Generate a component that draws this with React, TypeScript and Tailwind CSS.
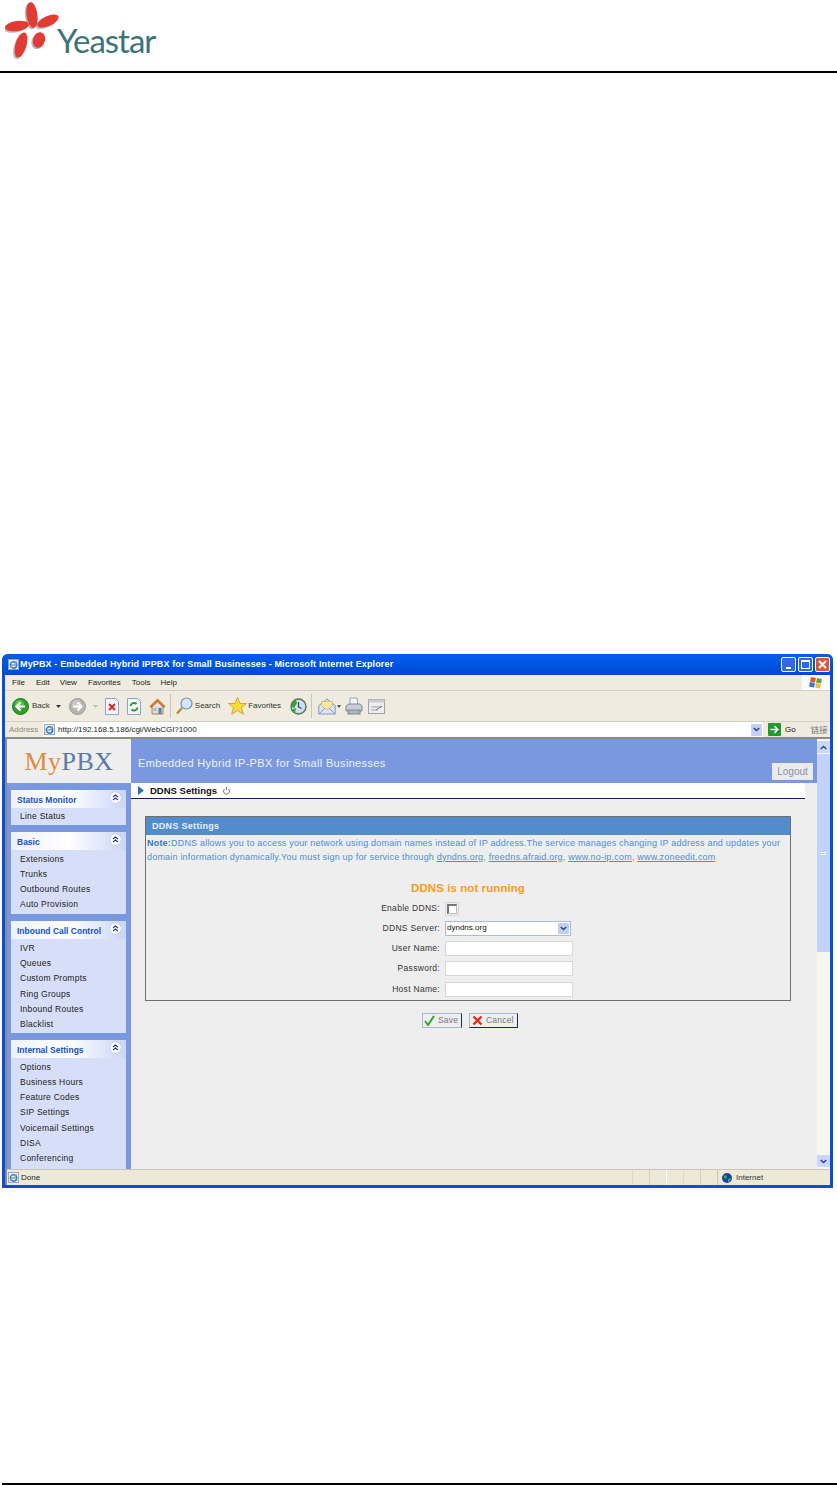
import React from "react";

const Back = ({ gray = false }: { gray?: boolean }) => (
  <svg width="17" height="17" viewBox="0 0 17 17" className="shrink-0">
    <circle cx="8.5" cy="8.5" r="8" fill={gray ? "#b5b5ae" : "#2f9e2a"} stroke={gray ? "#9b9b95" : "#1c7a1c"} />
    <circle cx="7.5" cy="6.5" r="4.5" fill={gray ? "#d2d2cc" : "#6fd05a"} opacity="0.7" />
    {gray ? (
      <path d="M4 8.5h8M8.5 4.5l4 4-4 4" stroke="#fff" strokeWidth="2.2" fill="none" />
    ) : (
      <path d="M13 8.5H5M8.5 4.5l-4 4 4 4" stroke="#fff" strokeWidth="2.2" fill="none" />
    )}
  </svg>
);
const Doc = ({ children }: { children: React.ReactNode }) => (
  <svg width="14" height="17" viewBox="0 0 14 17" className="shrink-0">
    <path d="M.5.5h10l3 3v13H.5z" fill="#f3f5fb" stroke="#8ea3cc" />
    {children}
  </svg>
);
const Home = () => (
  <svg width="17" height="17" viewBox="0 0 17 17" className="shrink-0">
    <path d="M3 8v8h11V8" fill="#e9dcc0" stroke="#a2865a" />
    <path d="M8.5 1L.8 8.5l1.4 1L8.5 4l6.3 5.5 1.4-1z" fill="#dd7c2a" stroke="#a9541a" strokeWidth=".6" />
    <rect x="9.5" y="10" width="3" height="6" fill="#4d7fc7" />
    <rect x="4.5" y="10" width="3" height="3" fill="#9cc0ea" />
  </svg>
);
const Search = () => (
  <svg width="17" height="18" viewBox="0 0 17 18" className="shrink-0">
    <path d="M6 11l-5 5.5" stroke="#b88a3a" strokeWidth="2.4" />
    <circle cx="10.5" cy="6.5" r="5.5" fill="#d3e6fa" stroke="#6b93bf" strokeWidth="1.2" />
  </svg>
);
const Star = () => (
  <svg width="19" height="18" viewBox="0 0 19 18" className="shrink-0">
    <path d="M9.5.5l2.6 6h6.4l-5 4.1 1.9 6.7-5.9-3.8-5.9 3.8 1.9-6.7-5-4.1h6.4z" fill="#fcd93b" stroke="#c39a1c" strokeWidth=".8" />
  </svg>
);
const History = () => (
  <svg width="17" height="17" viewBox="0 0 17 17" className="shrink-0">
    <circle cx="8.5" cy="8.5" r="7.5" fill="#cfdcea" stroke="#54765a" strokeWidth="1.4" />
    <path d="M1.5 9A7 7 0 0 1 6 2l1 3-3 5z" fill="#37a03a" />
    <path d="M1 12l5-2-1 5z" fill="#37a03a" />
    <path d="M8.5 4v5l3 1.5" stroke="#27496f" strokeWidth="1.2" fill="none" />
  </svg>
);
const Mail = () => (
  <svg width="18" height="17" viewBox="0 0 18 17" className="shrink-0">
    <path d="M.8 7.500L9 1l8.200 6.500V16H.8z" fill="#dbe6f8" stroke="#7f98c9" />
    <path d="M3.500 8V3.500h11V8L9 12z" fill="#fbe6a8" stroke="#d9a646" strokeWidth=".6" />
    <path d="M1 16l6-6M17 16l-6-6" stroke="#7f98c9" />
  </svg>
);
const Printer = () => (
  <svg width="18" height="18" viewBox="0 0 18 18" className="shrink-0">
    <path d="M5 1h7l1 7H5z" fill="#f4f5f8" stroke="#9aa3b4" />
    <path d="M1 9l3-2h11l2 2v5H1z" fill="#c9ced6" stroke="#7f8794" />
    <rect x="3" y="13" width="12" height="4" fill="#aeb4bf" stroke="#7f8794" />
  </svg>
);
const Edit = () => (
  <svg width="17" height="15" viewBox="0 0 17 15" className="shrink-0">
    <rect x=".5" y=".5" width="16" height="14" fill="#eceef0" stroke="#9ba1a8" />
    <rect x=".5" y=".5" width="16" height="3" fill="#c7ccd2" />
    <path d="M3 8h11M3 11h7" stroke="#9ba1a8" />
    <path d="M8 11l6-4" stroke="#737a82" />
  </svg>
);
const IeIcon = ({ size = 12 }: { size?: number }) => (
  <svg width={size} height={size} viewBox="0 0 12 12" className="shrink-0">
    <rect x=".5" y=".5" width="11" height="11" fill="#eef3fb" stroke="#8ea3cc" />
    <circle cx="6" cy="6.500" r="3.500" fill="none" stroke="#2f7fd0" strokeWidth="1.600" />
    <path d="M2.500 6.500h7" stroke="#2f7fd0" />
    <path d="M1.500 9.500C4 8.500 8 5 10 1.500" stroke="#e0a52d" fill="none" />
  </svg>
);
const Chevrons = () => (
  <svg width="7" height="7" viewBox="0 0 7 7">
    <path d="M1 3l2.500-2L6 3M1 6l2.500-2L6 6" stroke="#1e3f91" strokeWidth="1.100" fill="none" />
  </svg>
);
const DownCaret = () => (
  <svg width="7" height="5" viewBox="0 0 7 5"><path d="M.7 1l2.800 2.600L6.300 1" stroke="#32457a" strokeWidth="1.500" fill="none" /></svg>
);

const groups = [
  { title: "Status Monitor", items: ["Line Status"], pb: "pb-[1px]" },
  { title: "Basic", items: ["Extensions", "Trunks", "Outbound Routes", "Auto Provision"], pb: "pb-[2px]" },
  { title: "Inbound Call Control", items: ["IVR", "Queues", "Custom Prompts", "Ring Groups", "Inbound Routes", "Blacklist"], pb: "pb-[1px]" },
  { title: "Internal Settings", items: ["Options", "Business Hours", "Feature Codes", "SIP Settings", "Voicemail Settings", "DISA", "Conferencing"], pb: "pb-[12px]" },
];

const Group = ({ title, items, pb }: { title: string; items: string[]; pb: string }) => (
  <div className={`w-[115px] shrink-0 bg-[#d6dff7] ${pb}`}>
    <div className="flex h-[18px] items-center justify-between bg-gradient-to-r from-[#eef2fc] via-[#ffffff] to-[#c9d6f8] pl-[6px] pr-[5px]">
      <span className="pt-[2px] text-[8.5px] font-bold text-[#1552c0]">{title}</span>
      <span className="mb-[3px] flex h-[11px] w-[11px] items-center justify-center rounded-full bg-white shadow-[0_0_1px_#7d8fb8]"><Chevrons /></span>
    </div>
    <div className="pt-[1px]">
      {items.map((t) => (
        <div key={t} className="flex h-[15.3px] items-center pl-[9px] text-[8.5px] tracking-[0.25px] text-[#222]">{t}</div>
      ))}
    </div>
  </div>
);

const Field = ({ label, children, h }: { label: string; children: React.ReactNode; h: string }) => (
  <div className={`flex items-center ${h}`}>
    <div className="w-[299px] pr-[5px] text-right text-[8.5px] tracking-[0.3px] text-[#333]">{label}</div>
    {children}
  </div>
);

const Input = () => <div className="h-[15px] w-[128px] border border-[#d6d6d6] bg-white" />;

export default function App() {
  return (
    <div className="flex h-[1485px] w-[837px] flex-col overflow-hidden bg-white font-['Liberation_Sans',Arial,sans-serif]">
      <header className="flex h-[73px] shrink-0 border-b-2 border-black">
        <div className="flex items-start">
          <svg width="60" height="60" viewBox="0 0 60 60" className="ml-[5px] mt-[1px] shrink-0">
            <g fill="#b9b9b9" transform="translate(-1.500 1.500)">
              <ellipse cx="27" cy="14" rx="5.500" ry="13" transform="rotate(-8 27 14)" />
              <ellipse cx="12" cy="25" rx="12" ry="5" transform="rotate(-8 12 25)" />
              <ellipse cx="43" cy="20" rx="11.500" ry="5" transform="rotate(-24 43 20)" />
              <ellipse cx="16" cy="44" rx="5.500" ry="13" transform="rotate(16 16 44)" />
              <ellipse cx="34" cy="39" rx="6" ry="8" transform="rotate(18 34 39)" />
            </g>
            <g fill="#e23b34">
              <ellipse cx="27" cy="14" rx="5.500" ry="13" transform="rotate(-8 27 14)" />
              <ellipse cx="12" cy="25" rx="12" ry="5" transform="rotate(-8 12 25)" />
              <ellipse cx="43" cy="20" rx="11.500" ry="5" transform="rotate(-24 43 20)" />
              <ellipse cx="16" cy="44" rx="5.500" ry="13" transform="rotate(16 16 44)" />
              <ellipse cx="34" cy="39" rx="6" ry="8" transform="rotate(18 34 39)" />
            </g>
          </svg>
          <span className="ml-[-8px] mt-[20px] font-['Lato',sans-serif] text-[33px] leading-[40px] tracking-[-1px] text-[#3e7377]">Yeastar</span>
        </div>
      </header>

      <main className="mt-[581px] ml-[2px] flex h-[534px] w-[831px] shrink-0 flex-col rounded-t-[6px] bg-[#0a4fdc] px-[3px] pb-[3px]">
        <div className="-mx-[3px] flex h-[21px] shrink-0 items-center rounded-t-[6px] bg-gradient-to-b from-[#0a5ce6] via-[#0054e3] to-[#0049cf] pl-[6px] pr-[1px]">
          <span className="mr-[1px]"><IeIcon size={11} /></span>
          <span className="text-[9px] font-bold tracking-[0.14px] text-white">MyPBX - Embedded Hybrid IPPBX for Small Businesses - Microsoft Internet Explorer</span>
          <div className="ml-auto flex gap-[2px] pr-[2px]">
            <div className="flex h-[15px] w-[15px] items-end justify-center rounded-[2px] border border-white bg-[#2f6ae6] pb-[2px]"><div className="h-[2px] w-[5px] bg-white" /></div>
            <div className="flex h-[15px] w-[15px] items-center justify-center rounded-[2px] border border-white bg-[#2f6ae6]"><div className="h-[9px] w-[9px] border border-t-2 border-white" /></div>
            <div className="flex h-[15px] w-[15px] items-center justify-center rounded-[2px] border border-white bg-[#e0553a]">
              <svg width="9" height="9" viewBox="0 0 9 9"><path d="M1 1l7 7M8 1L1 8" stroke="#fff" strokeWidth="2" /></svg>
            </div>
          </div>
        </div>

        <div className="flex h-[16px] shrink-0 items-center border-b border-[#d5d2c4] bg-[#efecdf] text-[8px] text-[#222]">
          <span className="ml-[7px]">File</span>
          <span className="ml-[11px]">Edit</span>
          <span className="ml-[10px]">View</span>
          <span className="ml-[11px]">Favorites</span>
          <span className="ml-[11px]">Tools</span>
          <span className="ml-[10px]">Help</span>
          <div className="ml-auto flex h-full w-[28px] items-center justify-center bg-white">
            <svg width="14" height="13" viewBox="0 0 14 13">
              <path d="M2 1l5 1-1 4.500-5-1z" fill="#e2562b" /><path d="M8 2l5 1-1 4.500-5-1z" fill="#5fa83a" />
              <path d="M1 6l5 1-1 4.500-5-1z" fill="#3a78d0" /><path d="M7 7l5 1-1 4.500-5-1z" fill="#eec13a" />
            </svg>
          </div>
        </div>

        <div className="flex h-[30px] shrink-0 items-center bg-[#efecdf] text-[8px] text-[#333]">
          <span className="ml-[7px]"><Back /></span>
          <span className="ml-[3px]">Back</span>
          <span className="ml-[6px]"><svg width="5" height="3" viewBox="0 0 5 3"><path d="M0 0h5L2.500 3z" fill="#333" /></svg></span>
          <span className="ml-[8px]"><Back gray /></span>
          <span className="ml-[7px]"><svg width="5" height="3" viewBox="0 0 5 3"><path d="M0 0h5L2.500 3z" fill="#bbb" /></svg></span>
          <span className="ml-[7px]"><Doc><path d="M4 6l6 6M10 6l-6 6" stroke="#d8262b" strokeWidth="2" /></Doc></span>
          <span className="ml-[8px]"><Doc><path d="M3.500 8a3.500 3.500 0 0 1 6-2M10.500 9.500a3.500 3.500 0 0 1-6 2" stroke="#2a9a32" strokeWidth="2" fill="none" /></Doc></span>
          <span className="ml-[8px]"><Home /></span>
          <span className="ml-[4px] h-[24px] w-px bg-[#c9c6b8]" />
          <span className="ml-[5px]"><Search /></span>
          <span className="ml-[2px]">Search</span>
          <span className="ml-[8px]"><Star /></span>
          <span className="ml-[1px]">Favorites</span>
          <span className="ml-[9px]"><History /></span>
          <span className="ml-[4px] h-[24px] w-px bg-[#c9c6b8]" />
          <span className="ml-[6px]"><Mail /></span>
          <span className="ml-[1px]"><svg width="4" height="3" viewBox="0 0 5 3"><path d="M0 0h5L2.500 3z" fill="#333" /></svg></span>
          <span className="ml-[4px]"><Printer /></span>
          <span className="ml-[5px]"><Edit /></span>
        </div>

        <div className="flex h-[16px] shrink-0 items-center border-t border-[#d5d2c4] bg-[#efecdf] text-[8px]">
          <span className="ml-[4px] w-[34px] text-[#8a8a80]">Address</span>
          <div className="flex h-full w-[720px] items-center bg-white pl-[1px]">
            <IeIcon size={11} />
            <span className="ml-[3px] text-[#222]">http://192.168.5.186/cgi/WebCGI?1000</span>
            <span className="ml-auto mr-[1px] flex h-[12px] w-[11px] items-center justify-center rounded-[1px] bg-[#c3d2f6]"><DownCaret /></span>
          </div>
          <span className="ml-[5px] flex h-[13px] w-[13px] items-center justify-center rounded-[1px] bg-[#1f9a2c]">
            <svg width="9" height="9" viewBox="0 0 9 9"><path d="M.5 4.500h7M4.500 1l3.300 3.500L4.500 8" stroke="#fff" strokeWidth="1.500" fill="none" /></svg>
          </span>
          <span className="ml-[4px] text-[#111]">Go</span>
          <span className="ml-[15px] font-['Noto_Sans_CJK_SC',sans-serif] text-[8.5px] text-[#777]">链接</span>
        </div>

        <div className="flex min-h-0 flex-1 flex-col border-t-2 border-l-2 border-[#8c8c85] bg-[#eee]">
          <div className="flex min-h-0 flex-1">
            <aside className="flex w-[124px] shrink-0 flex-col bg-[#7a98df]">
              <div className="flex h-[44px] shrink-0 items-center justify-center bg-[#eeeeee] pt-[1px] font-['Liberation_Serif',serif] text-[26px] tracking-[0.5px]">
                <span className="text-[#e08c3e]">My</span><span className="text-[#5a7aa8]">PBX</span>
              </div>
              <div className="flex min-h-0 flex-1 flex-col gap-[7px] overflow-hidden pl-[4px] pt-[7px]">
                {groups.map((g) => <Group key={g.title} {...g} />)}
              </div>
            </aside>

            <section className="flex min-w-0 flex-1 flex-col">
              <div className="flex h-[44px] shrink-0 items-end justify-between bg-[#7a98df] pr-[4px]">
                <span className="mb-[12px] ml-[7px] text-[11px] tracking-[0.34px] text-[#eef2fb]">Embedded Hybrid IP-PBX for Small Businesses</span>
                <span className="mb-[3px] flex h-[17px] w-[41px] items-center justify-center border border-[#e8e8e8] bg-[#ececec] text-[10px] text-[#8a8fb0]">Logout</span>
              </div>
              <div className="flex h-[16px] w-[674px] shrink-0 items-center border-b border-[#12205f] bg-white pl-[7px]">
                <svg width="6" height="9" viewBox="0 0 6 9"><path d="M0 0l6 4.500L0 9z" fill="#2a6fc4" /></svg>
                <span className="ml-[6px] pt-[1px] text-[9.5px] font-bold text-[#111]">DDNS Settings</span>
                <svg width="9" height="9" viewBox="0 0 9 9" className="ml-[5px]"><path d="M4.500 1v3M2.500 3A3 3 0 1 0 6.500 3" stroke="#777" fill="none" /></svg>
              </div>
              <div className="ml-[14px] mt-[17px] w-[646px] border border-[#6e6e6e] bg-[#eee]">
                <div className="flex h-[18px] items-center bg-[#528ccc] pl-[6px] pt-[1px] text-[9px] font-bold tracking-[0.3px] text-[#e8f0fa]">DDNS Settings</div>
                <div className="px-[1px] pt-[2px] text-[9px] leading-[13.5px] tracking-[0.2px] text-[#4a8ed6]">
                  <b className="text-[#2f76c4]">Note:</b>DDNS allows you to access your network using domain names instead of IP address.The service manages changing IP address and updates your<br />
                  domain information dynamically.You must sign up for service through <u>dyndns.org</u>, <u>freedns.afraid.org</u>, <u>www.no-ip.com</u>, <u>www.zoneedit.com</u>
                </div>
                <div className="mt-[16px] text-center text-[11.5px] font-bold tracking-[0.08px] text-[#ff9a14]">DDNS is not running</div>
                <div className="mt-[2px]">
                  <Field label="Enable DDNS:" h="h-[19px]">
                    <div className="flex h-[14px] w-[14px] items-center justify-center border border-[#d8d8d8]"><div className="h-[10px] w-[10px] border border-t-2 border-l-2 border-[#777] border-r-[#bbb] border-b-[#bbb] bg-white" /></div>
                  </Field>
                  <Field label="DDNS Server:" h="h-[20px]">
                    <div className="flex h-[15px] w-[126px] items-center justify-between border border-[#a9bdd6] bg-white pl-[1px] pr-[1px] text-[8px] text-[#111]">
                      dyndns.org
                      <span className="flex h-[11px] w-[11px] items-center justify-center bg-[#bfd0f3]"><DownCaret /></span>
                    </div>
                  </Field>
                  <Field label="User Name:" h="h-[20px]"><Input /></Field>
                  <Field label="Password:" h="h-[21px]"><Input /></Field>
                  <Field label="Host Name:" h="h-[21px]"><Input /></Field>
                </div>
              </div>
              <div className="ml-[291px] mt-[12px] flex gap-[7px] text-[8.5px] tracking-[0.2px] text-[#777]">
                <button className="flex h-[15px] w-[40px] items-center border border-[#a7b8cf] border-r-[#1b2a5c] pl-[1px]">
                  <svg width="11" height="11" viewBox="0 0 11 11"><path d="M1 6l3 4 6-9" stroke="#35a52f" strokeWidth="2" fill="none" /></svg>
                  <span className="ml-[3px]">Save</span>
                </button>
                <button className="flex h-[15px] w-[49px] items-center border border-[#a7b8cf] border-r-[#1b2a5c] border-b-[#1b2a5c] pl-[2px]">
                  <svg width="11" height="11" viewBox="0 0 11 11"><path d="M1.500 1.500l8 8M9.500 1.500l-8 8" stroke="#e52b1f" strokeWidth="2.400" /></svg>
                  <span className="ml-[3px]">Cancel</span>
                </button>
              </div>
            </section>

            <div className="flex w-[13px] shrink-0 flex-col bg-[#f7f6ef] py-[2px]">
              <div className="flex h-[12px] items-center justify-center rounded-[1px] bg-[#c9d8fa]"><span className="rotate-180 leading-[0]"><DownCaret /></span></div>
              <div className="mt-px flex h-[198px] flex-col items-center justify-center gap-px rounded-[1px] border border-[#c4d4f7] bg-[#c1d2fb]">
                <div className="h-px w-[5px] bg-white" />
                <div className="h-px w-[5px] bg-white" />
              </div>
              <div className="mt-auto flex h-[12px] items-center justify-center rounded-[1px] bg-[#c9d8fa]"><DownCaret /></div>
            </div>
          </div>

          <footer className="flex h-[16px] shrink-0 items-center border-t border-[#c9c6b8] bg-[#ece9d8] text-[8px] text-[#222]">
            <span className="ml-[1px]"><IeIcon size={11} /></span>
            <span className="ml-[2px]">Done</span>
            <div className="ml-auto flex h-full items-center">
              <span className="h-full w-[17px] border-l border-[#dcd9c9]" />
              <span className="h-full w-[17px] border-l border-[#d5d2c4]" />
              <span className="h-full w-[17px] border-l border-white" />
              <span className="h-full w-[17px] border-l border-[#dcd9c9]" />
              <span className="h-full w-[17px] border-l border-[#d5d2c4]" />
              <span className="flex h-full w-[113px] items-center border-l border-[#c9c6b8] pl-[4px]">
                <svg width="10" height="10" viewBox="0 0 10 10"><circle cx="5" cy="5" r="5" fill="#1b3fa6" /><path d="M2 2l3 1-1 3-2-1zM6 6l3-1-1 3-2 1z" fill="#39b53a" /></svg>
                <span className="ml-[4px] text-[#333]">Internet</span>
              </span>
            </div>
          </footer>
        </div>
      </main>

      <div className="mt-auto ml-[2px] h-[2px] shrink-0 bg-black" />
    </div>
  );
}
